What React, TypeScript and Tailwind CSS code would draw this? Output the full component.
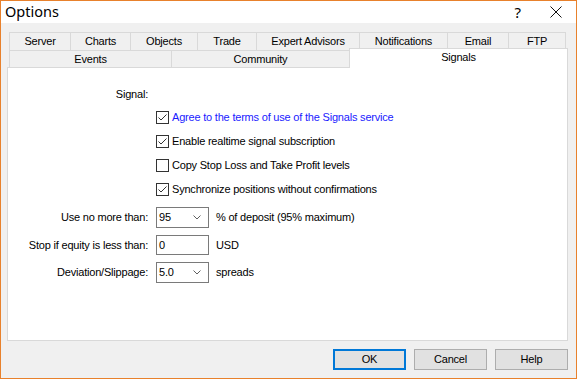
import React from "react";

const topTabs = [
  { label: "Server", w: "w-[61px]" },
  { label: "Charts", w: "w-[60px]" },
  { label: "Objects", w: "w-[67px]" },
  { label: "Trade", w: "w-[59px]" },
  { label: "Expert Advisors", w: "w-[103px]" },
  { label: "Notifications", w: "w-[88px]" },
  { label: "Email", w: "w-[61px]" },
  { label: "FTP", w: "w-[58px]" },
];

function Check({ checked }: { checked: boolean }) {
  return (
    <span className="w-[13px] h-[13px] border border-[#333] bg-white flex items-center justify-center shrink-0">
      {checked && (
        <svg width="11" height="11" viewBox="0 0 11 11">
          <polyline points="1.5,5.5 4,8 9.5,2.5" fill="none" stroke="#333" strokeWidth="1" />
        </svg>
      )}
    </span>
  );
}

function CheckRow({ checked, label, blue }: { checked: boolean; label: string; blue?: boolean }) {
  return (
    <div className="h-[24px] flex items-center">
      <div className="w-[140px] shrink-0" />
      <div className="ml-[8px] flex items-center gap-[3px]">
        <Check checked={checked} />
        <span className={blue ? "text-[#1a1aff]" : "text-black"}>{label}</span>
      </div>
    </div>
  );
}

function Chevron() {
  return (
    <svg width="8" height="5" viewBox="0 0 8 5">
      <polyline points="0.5,0.5 4,4 7.5,0.5" fill="none" stroke="#606060" strokeWidth="1" />
    </svg>
  );
}

function FieldRow({ label, value, suffix, combo, className }: { label: string; value: string; suffix: string; combo?: boolean; className?: string }) {
  return (
    <div className={`flex items-center ${className ?? ""}`}>
      <div className="w-[140px] shrink-0 text-right">{label}</div>
      <div className={`ml-[8px] w-[53px] ${combo ? "h-[21px]" : "h-[20px]"} border border-[#7a7a7a] bg-white flex items-center justify-between pl-[2px] pr-[7px]`}>
        <span>{value}</span>
        {combo && <Chevron />}
      </div>
      <span className="ml-[7px]">{suffix}</span>
    </div>
  );
}

function Button({ children, primary }: { children: React.ReactNode; primary?: boolean }) {
  return (
    <div
      className={`w-[73px] h-[21px] flex items-center justify-center bg-[#e1e1e1] ${
        primary ? "border-2 border-[#0078d7]" : "border border-[#adadad]"
      }`}
    >
      {children}
    </div>
  );
}

export default function App() {
  return (
    <div className="w-[577px] h-[379px] border border-[#e8812c] bg-[#f0f0f0] flex flex-col font-['Liberation_Sans',Arial,sans-serif] text-[11px] tracking-[-0.2px] text-black overflow-hidden">
      {/* title bar */}
      <div className="h-[22px] bg-white flex items-center">
        <span className="ml-[4px] text-[14.5px] tracking-normal font-['Noto_Sans',sans-serif]">Options</span>
        <span className="ml-auto text-[15px] tracking-normal font-['Noto_Sans',sans-serif] mr-[29px]">?</span>
        <svg className="mr-[14px]" width="12" height="12" viewBox="0 0 12 12">
          <path d="M0.5 0.5 L11.5 11.5 M11.5 0.5 L0.5 11.5" stroke="#111" strokeWidth="1" />
        </svg>
      </div>

      <div className="flex flex-col pl-[6px] pr-[8px] mt-[9px]">
        {/* tab row 1 */}
        <div className="flex ml-[2px] h-[18px]">
          {topTabs.map((t, i) => (
            <div
              key={t.label}
              className={`${t.w} h-full flex items-center justify-center border-t border-l border-[#d9d9d9] ${
                i === topTabs.length - 1 ? "border-r" : ""
              }`}
            >
              {t.label}
            </div>
          ))}
        </div>
        {/* tab row 2 */}
        <div className="flex ml-[2px] h-[17px] items-end">
          <div className="w-[162px] h-full flex items-center justify-center border-t border-l border-[#d9d9d9]">Events</div>
          <div className="w-[178px] h-full flex items-center justify-center border-t border-l border-[#d9d9d9]">Community</div>
          <div className="flex-1 h-[20px] -mb-px relative z-10 bg-white flex items-center justify-center pb-[3px] border-t border-l border-r border-[#d9d9d9]">
            Signals
          </div>
        </div>

        {/* panel */}
        <div className="h-[274px] bg-white border border-[#d9d9d9] flex flex-col pt-[19px]">
          <div className="h-[14px] flex items-center">
            <div className="w-[140px] text-right">Signal:</div>
          </div>
          <div className="mt-[4px]">
            <CheckRow checked blue label="Agree to the terms of use of the Signals service" />
            <CheckRow checked label="Enable realtime signal subscription" />
            <CheckRow checked={false} label="Copy Stop Loss and Take Profit levels" />
            <CheckRow checked label="Synchronize positions without confirmations" />
          </div>
          <FieldRow className="mt-[6px]" label="Use no more than:" value="95" suffix="% of deposit (95% maximum)" combo />
          <FieldRow className="mt-[7px]" label="Stop if equity is less than:" value="0" suffix="USD" />
          <FieldRow className="mt-[7px]" label="Deviation/Slippage:" value="5.0" suffix="spreads" combo />
        </div>

        {/* buttons */}
        <div className="flex justify-end gap-[8px] mt-[8px]">
          <Button primary>OK</Button>
          <Button>Cancel</Button>
          <Button>Help</Button>
        </div>
      </div>
    </div>
  );
}
